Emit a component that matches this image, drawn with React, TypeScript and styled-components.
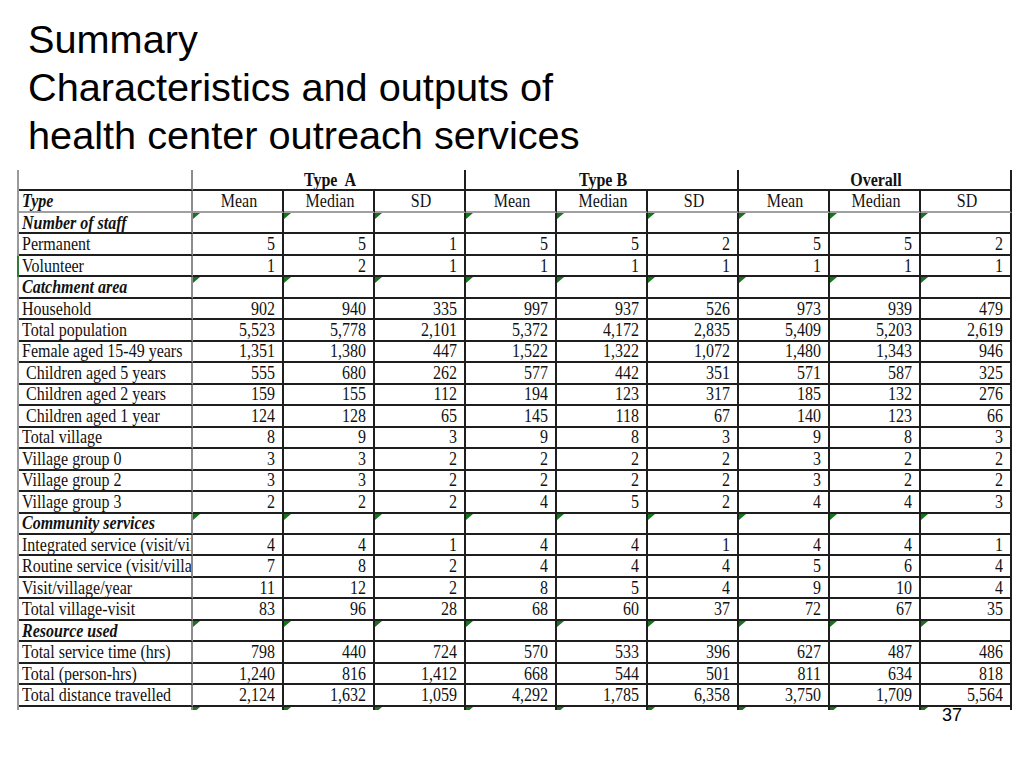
import React from 'react'
import styled, { createGlobalStyle, css } from 'styled-components'

const GlobalStyle = createGlobalStyle`
  html, body {
    margin: 0;
    padding: 0;
    background: #fff;
  }
`

const Page = styled.div`
  width: 1024px;
  height: 768px;
  display: flex;
  flex-direction: column;
  background: #fff;
  color: #000;
  overflow: hidden;
`
const Title = styled.h1`
  margin: 0;
  padding: 15px 0 0 28px;
  font-family: 'Liberation Sans', Arial, sans-serif;
  font-weight: normal;
  font-size: 39.7px;
  line-height: 48px;
  color: #000;
`
const Sheet = styled.div`
  margin: 11px 0 0 17px;
  display: grid;
  grid-template-columns: 174px repeat(9, 91px);
  grid-template-rows: repeat(25, 21.48px) 3px;
  border-left: 2px solid #9a9a9a;
  width: max-content;
  font-family: 'Liberation Serif', 'Times New Roman', serif;
  font-size: 16px;
  color: #111;
`
const Cell = styled.div<{
  $align?: 'left' | 'center' | 'right'
  $bold?: boolean
  $italic?: boolean
  $span?: number
  $label?: boolean
  $lightBottom?: boolean
  $noBottom?: boolean
  $mark?: boolean
  $accent?: boolean
  $indent?: boolean
}>`
  position: relative;
  box-sizing: border-box;
  display: flex;
  align-items: center;
  overflow: hidden;
  white-space: pre;
  justify-content: ${(p) =>
    p.$align === 'center' ? 'center' : p.$align === 'right' ? 'flex-end' : 'flex-start'};
  padding: ${(p) => (p.$align === 'right' ? '0 7px 0 0' : p.$indent ? '0 0 0 7px' : '0 0 0 3px')};
  font-weight: ${(p) => (p.$bold ? 'bold' : 'normal')};
  font-style: ${(p) => (p.$italic ? 'italic' : 'normal')};
  border-right: 2px solid ${(p) => (p.$label ? '#8c8c8c' : '#1e1e1e')};
  border-bottom: ${(p) => (p.$noBottom ? 'none' : p.$lightBottom ? '2px solid #a0a0a0' : '2px solid #1e1e1e')};
  ${(p) => p.$span && css`grid-column: span ${p.$span};`}
  ${(p) =>
    p.$mark &&
    css`
      &::before {
        content: '';
        position: absolute;
        top: 0;
        left: 0;
        border-top: 6px solid #16741a;
        border-right: 7px solid transparent;
      }
    `}
  ${(p) =>
    p.$accent &&
    css`
      overflow: visible;
      &::after {
        content: '';
        position: absolute;
        top: 0;
        bottom: -2px;
        left: -2px;
        width: 2px;
        background: #2e7d32;
      }
    `}
`
const Txt = styled.span`
  display: inline-block;
  transform: scaleY(1.14);
  line-height: 18px;
`
const Footer = styled.div`
  display: flex;
  justify-content: flex-end;
  padding-right: 62px;
  margin-top: -5px;
  font-family: 'Liberation Sans', Arial, sans-serif;
  font-size: 18px;
  line-height: 21px;
  color: #000;
`

type Row = {
  label: string
  section?: boolean
  indent?: boolean
  accent?: boolean
  values?: string[]
}

const groups = ['Type\u00a0 A', 'Type B', 'Overall']
const stats = ['Mean', 'Median', 'SD']

const rows: Row[] = [
  { label: 'Number of staff', section: true },
  { label: 'Permanent', values: ['5', '5', '1', '5', '5', '2', '5', '5', '2'] },
  { label: 'Volunteer', accent: true, values: ['1', '2', '1', '1', '1', '1', '1', '1', '1'] },
  { label: 'Catchment area', section: true },
  { label: 'Household', values: ['902', '940', '335', '997', '937', '526', '973', '939', '479'] },
  { label: 'Total population', values: ['5,523', '5,778', '2,101', '5,372', '4,172', '2,835', '5,409', '5,203', '2,619'] },
  { label: 'Female aged 15-49 years', values: ['1,351', '1,380', '447', '1,522', '1,322', '1,072', '1,480', '1,343', '946'] },
  { label: 'Children aged 5 years', indent: true, values: ['555', '680', '262', '577', '442', '351', '571', '587', '325'] },
  { label: 'Children aged 2 years', indent: true, values: ['159', '155', '112', '194', '123', '317', '185', '132', '276'] },
  { label: 'Children aged 1 year', indent: true, values: ['124', '128', '65', '145', '118', '67', '140', '123', '66'] },
  { label: 'Total village', values: ['8', '9', '3', '9', '8', '3', '9', '8', '3'] },
  { label: 'Village group 0', values: ['3', '3', '2', '2', '2', '2', '3', '2', '2'] },
  { label: 'Village group 2', values: ['3', '3', '2', '2', '2', '2', '3', '2', '2'] },
  { label: 'Village group 3', values: ['2', '2', '2', '4', '5', '2', '4', '4', '3'] },
  { label: 'Community services', section: true },
  { label: 'Integrated service (visit/vil', values: ['4', '4', '1', '4', '4', '1', '4', '4', '1'] },
  { label: 'Routine service (visit/villa', values: ['7', '8', '2', '4', '4', '4', '5', '6', '4'] },
  { label: 'Visit/village/year', values: ['11', '12', '2', '8', '5', '4', '9', '10', '4'] },
  { label: 'Total village-visit', values: ['83', '96', '28', '68', '60', '37', '72', '67', '35'] },
  { label: 'Resource used', section: true },
  { label: 'Total service time (hrs)', values: ['798', '440', '724', '570', '533', '396', '627', '487', '486'] },
  { label: 'Total (person-hrs)', values: ['1,240', '816', '1,412', '668', '544', '501', '811', '634', '818'] },
  { label: 'Total distance travelled', values: ['2,124', '1,632', '1,059', '4,292', '1,785', '6,358', '3,750', '1,709', '5,564'] },
]

const nine = Array.from({ length: 9 }, (_, i) => i)

export default function App() {
  return (
    <Page>
      <GlobalStyle />
      <Title>
        Summary
        <br />
        Characteristics and outputs of
        <br />
        health center outreach services
      </Title>
      <Sheet>
        <Cell $label />
        {groups.map((g) => (
          <Cell key={g} $span={3} $align="center" $bold>
            <Txt>{g}</Txt>
          </Cell>
        ))}

        <Cell $label $bold $italic $lightBottom>
          <Txt>Type</Txt>
        </Cell>
        {nine.map((i) => (
          <Cell key={i} $align="center" $lightBottom>
            <Txt>{stats[i % 3]}</Txt>
          </Cell>
        ))}

        {rows.map((r) => (
          <React.Fragment key={r.label}>
            <Cell $label $bold={r.section} $italic={r.section} $indent={r.indent} $accent={r.accent}>
              <Txt>{r.label}</Txt>
            </Cell>
            {nine.map((i) =>
              r.values ? (
                <Cell key={i} $align="right">
                  <Txt>{r.values[i]}</Txt>
                </Cell>
              ) : (
                <Cell key={i} $mark />
              )
            )}
          </React.Fragment>
        ))}

        <Cell $label $noBottom />
        {nine.map((i) => (
          <Cell key={i} $mark $noBottom />
        ))}
      </Sheet>
      <Footer>37</Footer>
    </Page>
  )
}
